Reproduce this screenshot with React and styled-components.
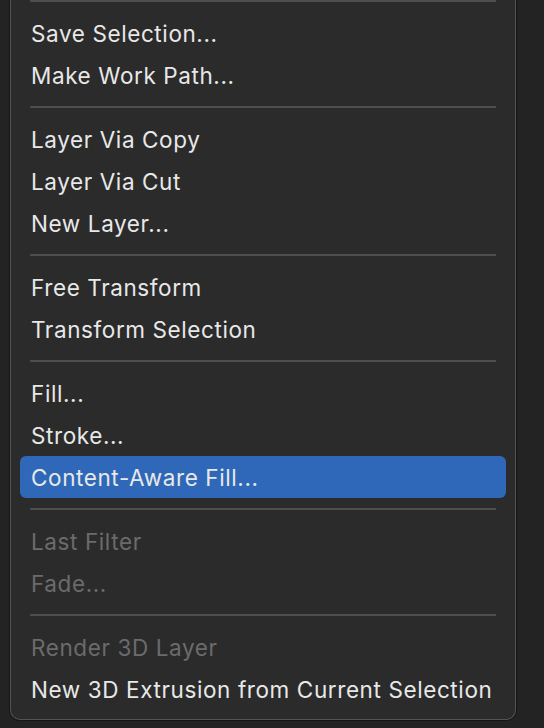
import React from 'react';
import styled, { createGlobalStyle } from 'styled-components';

const menu = [
  [{ label: 'Save Selection...' }, { label: 'Make Work Path...' }],
  [{ label: 'Layer Via Copy' }, { label: 'Layer Via Cut' }, { label: 'New Layer...' }],
  [{ label: 'Free Transform' }, { label: 'Transform Selection' }],
  [{ label: 'Fill...' }, { label: 'Stroke...' }, { label: 'Content-Aware Fill...', active: true }],
  [{ label: 'Last Filter', disabled: true }, { label: 'Fade...', disabled: true }],
  [{ label: 'Render 3D Layer', disabled: true }, { label: 'New 3D Extrusion from Current Selection' }],
];

function App() {
  return (
    <Page>
      <GlobalStyle />
      <Menu>
        {menu.map((group, i) => (
          <React.Fragment key={i}>
            <Separator $first={i === 0} />
            {group.map((item) => (
              <Item key={item.label} $active={item.active} $disabled={item.disabled}>
                {item.label}
              </Item>
            ))}
          </React.Fragment>
        ))}
      </Menu>
    </Page>
  );
}

export default App;

const GlobalStyle = createGlobalStyle`
  html, body {
    margin: 0;
    background: #232323;
  }
  body {
    font-family: Inter, "Noto Sans", "Liberation Sans", sans-serif;
  }
`;

const Page = styled.div`
  width: 544px;
  height: 728px;
  padding: 0 0 0 10px;
  box-sizing: border-box;
  overflow: hidden;
`;

const Menu = styled.div`
  width: 506px;
  height: 720px;
  box-sizing: border-box;
  background: #2b2b2b;
  border: 1px solid #545454;
  border-top: none;
  border-radius: 0 0 10px 10px;
  box-shadow: 0 0 0 1px #161616;
  padding: 0 9px 9px;
  display: flex;
  flex-direction: column;
`;

const Separator = styled.div`
  height: 2px;
  background: #4e4e4e;
  margin: ${(p) => (p.$first ? '0 10px 10px' : '10px')};
  flex-shrink: 0;
`;

const Item = styled.div`
  height: 42px;
  flex-shrink: 0;
  display: flex;
  align-items: center;
  padding: 0 11px;
  border-radius: 6px;
  font-size: 22.5px;
  letter-spacing: 0.6px;
  white-space: nowrap;
  color: ${(p) => (p.$disabled ? '#6b6b6b' : '#e8e8e8')};
  background: ${(p) => (p.$active ? '#2f68b9' : 'transparent')};
`;
